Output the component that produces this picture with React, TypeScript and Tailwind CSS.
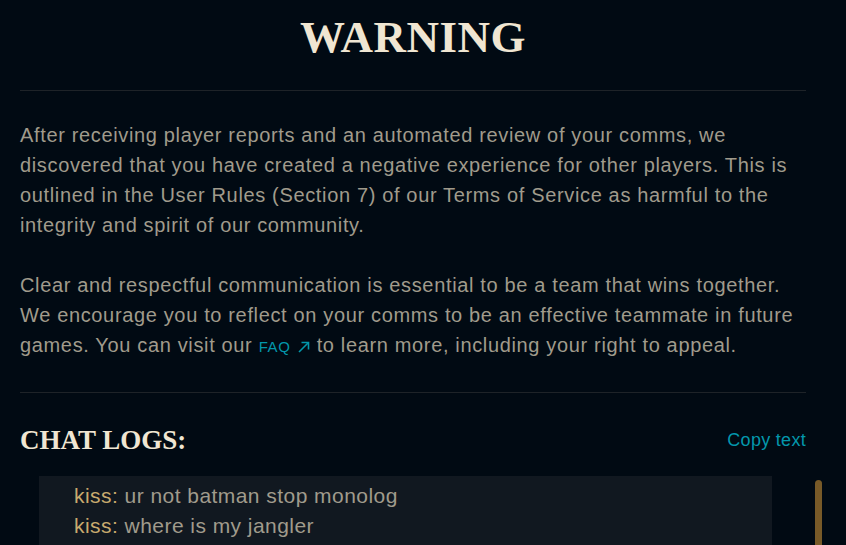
const body = { fontFamily: '"Liberation Sans", Arial, sans-serif' };
const serif = { fontFamily: '"Liberation Serif", "DejaVu Serif", serif' };

const logs = [
  { name: 'kiss', msg: 'ur not batman stop monolog' },
  { name: 'kiss', msg: 'where is my jangler' },
];

function ExternalArrow() {
  return (
    <svg width="12" height="12" viewBox="0 0 12 12" fill="none" stroke="currentColor" strokeWidth="1.6">
      <path d="M1 11 L10.5 1.5" />
      <path d="M3.5 1.5 H10.5 V8.5" />
    </svg>
  );
}

export default function App() {
  return (
    <div className="h-[545px] w-[846px] overflow-hidden bg-[#010a13] pl-5 pr-10" style={body}>
      <h1
        className="pt-[11px] text-center text-[45px] font-bold leading-[52px] tracking-[0.5px] text-[#f0e6d2]"
        style={serif}
      >
        WARNING
      </h1>
      <div className="mt-[27px] h-px bg-[#1e2328]" />

      <div className="whitespace-nowrap pt-[29px] text-[20px] leading-[30px] tracking-[0.65px] text-[#a09b8c]">
        <p>
          After receiving player reports and an automated review of your comms, we
          <br />
          discovered that you have created a negative experience for other players. This is
          <br />
          outlined in the User Rules (Section 7) of our Terms of Service as harmful to the
          <br />
          integrity and spirit of our community.
        </p>
        <p className="mt-[30px]">
          Clear and respectful communication is essential to be a team that wins together.
          <br />
          We encourage you to reflect on your comms to be an effective teammate in future
          <br />
          games. You can visit our{' '}
          <a className="inline-flex items-center gap-[8px] text-[15px] tracking-[0.6px] text-[#0397ab]">
            FAQ
            <ExternalArrow />
          </a>{' '}
          to learn more, including your right to appeal.
        </p>
      </div>

      <div className="mt-[30px] h-px bg-[#1e2328]" />

      <div className="mt-[31px] flex h-8 items-center justify-between">
        <h2 className="text-[27px] font-bold text-[#f0e6d2]" style={serif}>
          CHAT LOGS:
        </h2>
        <button className="text-[18px] tracking-[0.3px] text-[#0397ab]">Copy text</button>
      </div>

      <div className="-mr-10 mt-[20px] flex gap-[43px] pl-[19px]">
        <div className="h-[80px] w-[733px] shrink-0 bg-[#111820] pl-[35px] pt-[5px] text-[21px] leading-[30px] tracking-[0.45px] text-[#a09b8c]">
          {logs.map((l, i) => (
            <div key={i}>
              <span className="text-[#c8aa6e]">{l.name}:</span> {l.msg}
            </div>
          ))}
        </div>
        <div className="mt-[4px] h-[80px] w-[7px] shrink-0 rounded-t-full bg-[#785a28]" />
      </div>
    </div>
  );
}
